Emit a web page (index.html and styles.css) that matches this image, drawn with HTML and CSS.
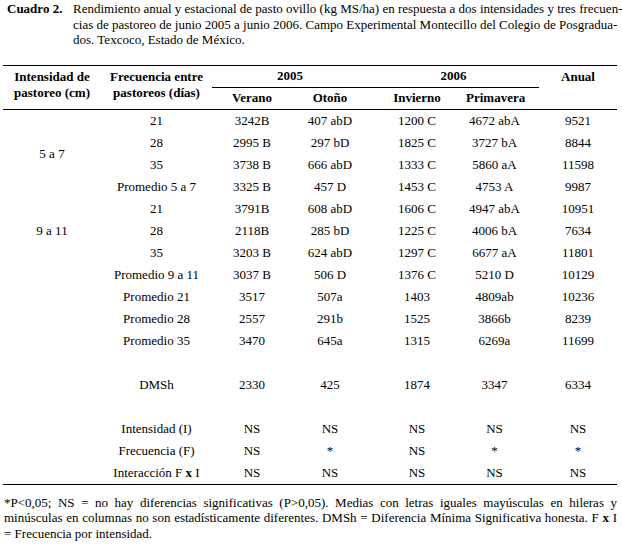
FILE: index.html
```html
<!DOCTYPE html>
<html lang="es">
<head>
<meta charset="utf-8">
<title>Cuadro 2</title>
<link rel="stylesheet" href="styles.css">
</head>
<body>
<div class="page">
  <div class="caption">
    <div class="label">Cuadro 2.</div>
    <div class="ctext">
      <span class="jl">Rendimiento anual y estacional de pasto ovillo (kg MS/ha) en respuesta a dos intensidades y tres frecuen-</span>
      <span class="jl">cias de pastoreo de junio 2005 a junio 2006. Campo Experimental Montecillo del Colegio de Posgradua-</span>
      <span class="ll">dos. Texcoco, Estado de México.</span>
    </div>
  </div>

  <table class="data">
    <colgroup>
      <col class="c1"><col class="c2"><col class="c3"><col class="c4"><col class="c5"><col class="c6"><col class="c7">
    </colgroup>
    <thead>
      <tr class="h1">
        <th rowspan="2" class="stack">Intensidad de<br>pastoreo (cm)</th>
        <th rowspan="2" class="stack">Frecuencia entre<br>pastoreos (días)</th>
        <th colspan="2" class="year">2005</th>
        <th colspan="2" class="year">2006</th>
        <th rowspan="2" class="anual">Anual</th>
      </tr>
      <tr class="h2">
        <th>Verano</th>
        <th>Otoño</th>
        <th>Invierno</th>
        <th class="prim">Primavera</th>
      </tr>
    </thead>
    <tbody>
      <tr><td rowspan="4" class="grp">5 a 7</td><td>21</td><td>3242B</td><td>407 abD</td><td>1200 C</td><td class="prim">4672 abA</td><td>9521</td></tr>
      <tr><td>28</td><td>2995 B</td><td>297 bD</td><td>1825 C</td><td class="prim">3727 bA</td><td>8844</td></tr>
      <tr><td>35</td><td>3738 B</td><td>666 abD</td><td>1333 C</td><td class="prim">5860 aA</td><td>11598</td></tr>
      <tr><td>Promedio 5 a 7</td><td>3325 B</td><td>457 D</td><td>1453 C</td><td class="prim">4753 A</td><td>9987</td></tr>
      <tr><td rowspan="3" class="grp">9 a 11</td><td>21</td><td>3791B</td><td>608 abD</td><td>1606 C</td><td class="prim">4947 abA</td><td>10951</td></tr>
      <tr><td>28</td><td>2118B</td><td>285 bD</td><td>1225 C</td><td class="prim">4006 bA</td><td>7634</td></tr>
      <tr><td>35</td><td>3203 B</td><td>624 abD</td><td>1297 C</td><td class="prim">6677 aA</td><td>11801</td></tr>
      <tr><td></td><td>Promedio 9 a 11</td><td>3037 B</td><td>506 D</td><td>1376 C</td><td class="prim">5210 D</td><td>10129</td></tr>
      <tr><td></td><td>Promedio 21</td><td>3517</td><td>507a</td><td>1403</td><td class="prim">4809ab</td><td>10236</td></tr>
      <tr><td></td><td>Promedio 28</td><td>2557</td><td>291b</td><td>1525</td><td class="prim">3866b</td><td>8239</td></tr>
      <tr><td></td><td>Promedio 35</td><td>3470</td><td>645a</td><td>1315</td><td class="prim">6269a</td><td>11699</td></tr>
      <tr><td></td><td></td><td></td><td></td><td></td><td class="prim"></td><td></td></tr>
      <tr><td></td><td>DMSh</td><td>2330</td><td>425</td><td>1874</td><td class="prim">3347</td><td>6334</td></tr>
      <tr><td></td><td></td><td></td><td></td><td></td><td class="prim"></td><td></td></tr>
      <tr><td></td><td>Intensidad (I)</td><td>NS</td><td>NS</td><td>NS</td><td class="prim">NS</td><td>NS</td></tr>
      <tr><td></td><td>Frecuencia (F)</td><td>NS</td><td>*</td><td>NS</td><td class="prim">*</td><td>*</td></tr>
      <tr class="last"><td></td><td>Interacción F <b>x</b> I</td><td>NS</td><td>NS</td><td>NS</td><td class="prim">NS</td><td>NS</td></tr>
    </tbody>
  </table>

  <div class="note">
    <span class="jl">*P&lt;0,05; NS = no hay diferencias significativas (P&gt;0,05). Medias con letras iguales mayúsculas en hileras y</span>
    <span class="jl">minúsculas en columnas no son estadísticamente diferentes. DMSh = Diferencia Mínima Significativa honesta. F <b>x</b> I</span>
    <span class="ll">= Frecuencia por intensidad.</span>
  </div>
</div>
</body>
</html>
```

FILE: styles.css
```css
html, body {
  margin: 0;
  padding: 0;
  background: #ffffff;
}

body {
  font-family: "Liberation Serif", "Times New Roman", serif;
  font-size: 13px;
  color: #000000;
}

.page {
  width: 614px;
  padding: 1px 0 0 3px;
}

.caption {
  display: flex;
  line-height: 15.5px;
  padding-left: 4px;
}

.caption .label {
  width: 66px;
  flex: none;
  font-weight: bold;
}

.caption .ctext {
  width: 544px;
}

.jl {
  display: block;
  white-space: nowrap;
  text-align: justify;
  text-align-last: justify;
}

.ll {
  display: block;
  white-space: nowrap;
}

.data {
  margin-top: 17px;
  width: 614px;
  table-layout: fixed;
  border-collapse: collapse;
  border-spacing: 0;
}

.c1 { width: 98px; }
.c2 { width: 111px; }
.c3 { width: 80px; }
.c4 { width: 76px; }
.c5 { width: 98px; }
.c6 { width: 73px; }
.c7 { width: 78px; }

.data th,
.data td {
  padding: 0;
  text-align: center;
  white-space: nowrap;
  line-height: 16px;
}

.data th {
  font-weight: bold;
}

.data thead tr.h1 th {
  border-top: 1px solid #000;
  height: 21px;
}

.data thead tr.h1 th.stack,
.data thead tr.h1 th.anual {
  vertical-align: top;
  padding-top: 3px;
  border-bottom: 1px solid #000;
}

.data thead tr.h1 th.year {
  border-bottom: 1px solid #000;
}

.data thead tr.h2 th {
  height: 21px;
  border-bottom: 1px solid #000;
}

.data tbody td {
  height: 22px;
}

.data .prim {
  padding-right: 16px;
}

.data tbody tr.last td {
  border-bottom: 1px solid #000;
}

.note {
  margin-top: 10px;
  width: 613px;
  padding-left: 1px;
  line-height: 15.5px;
}
```
